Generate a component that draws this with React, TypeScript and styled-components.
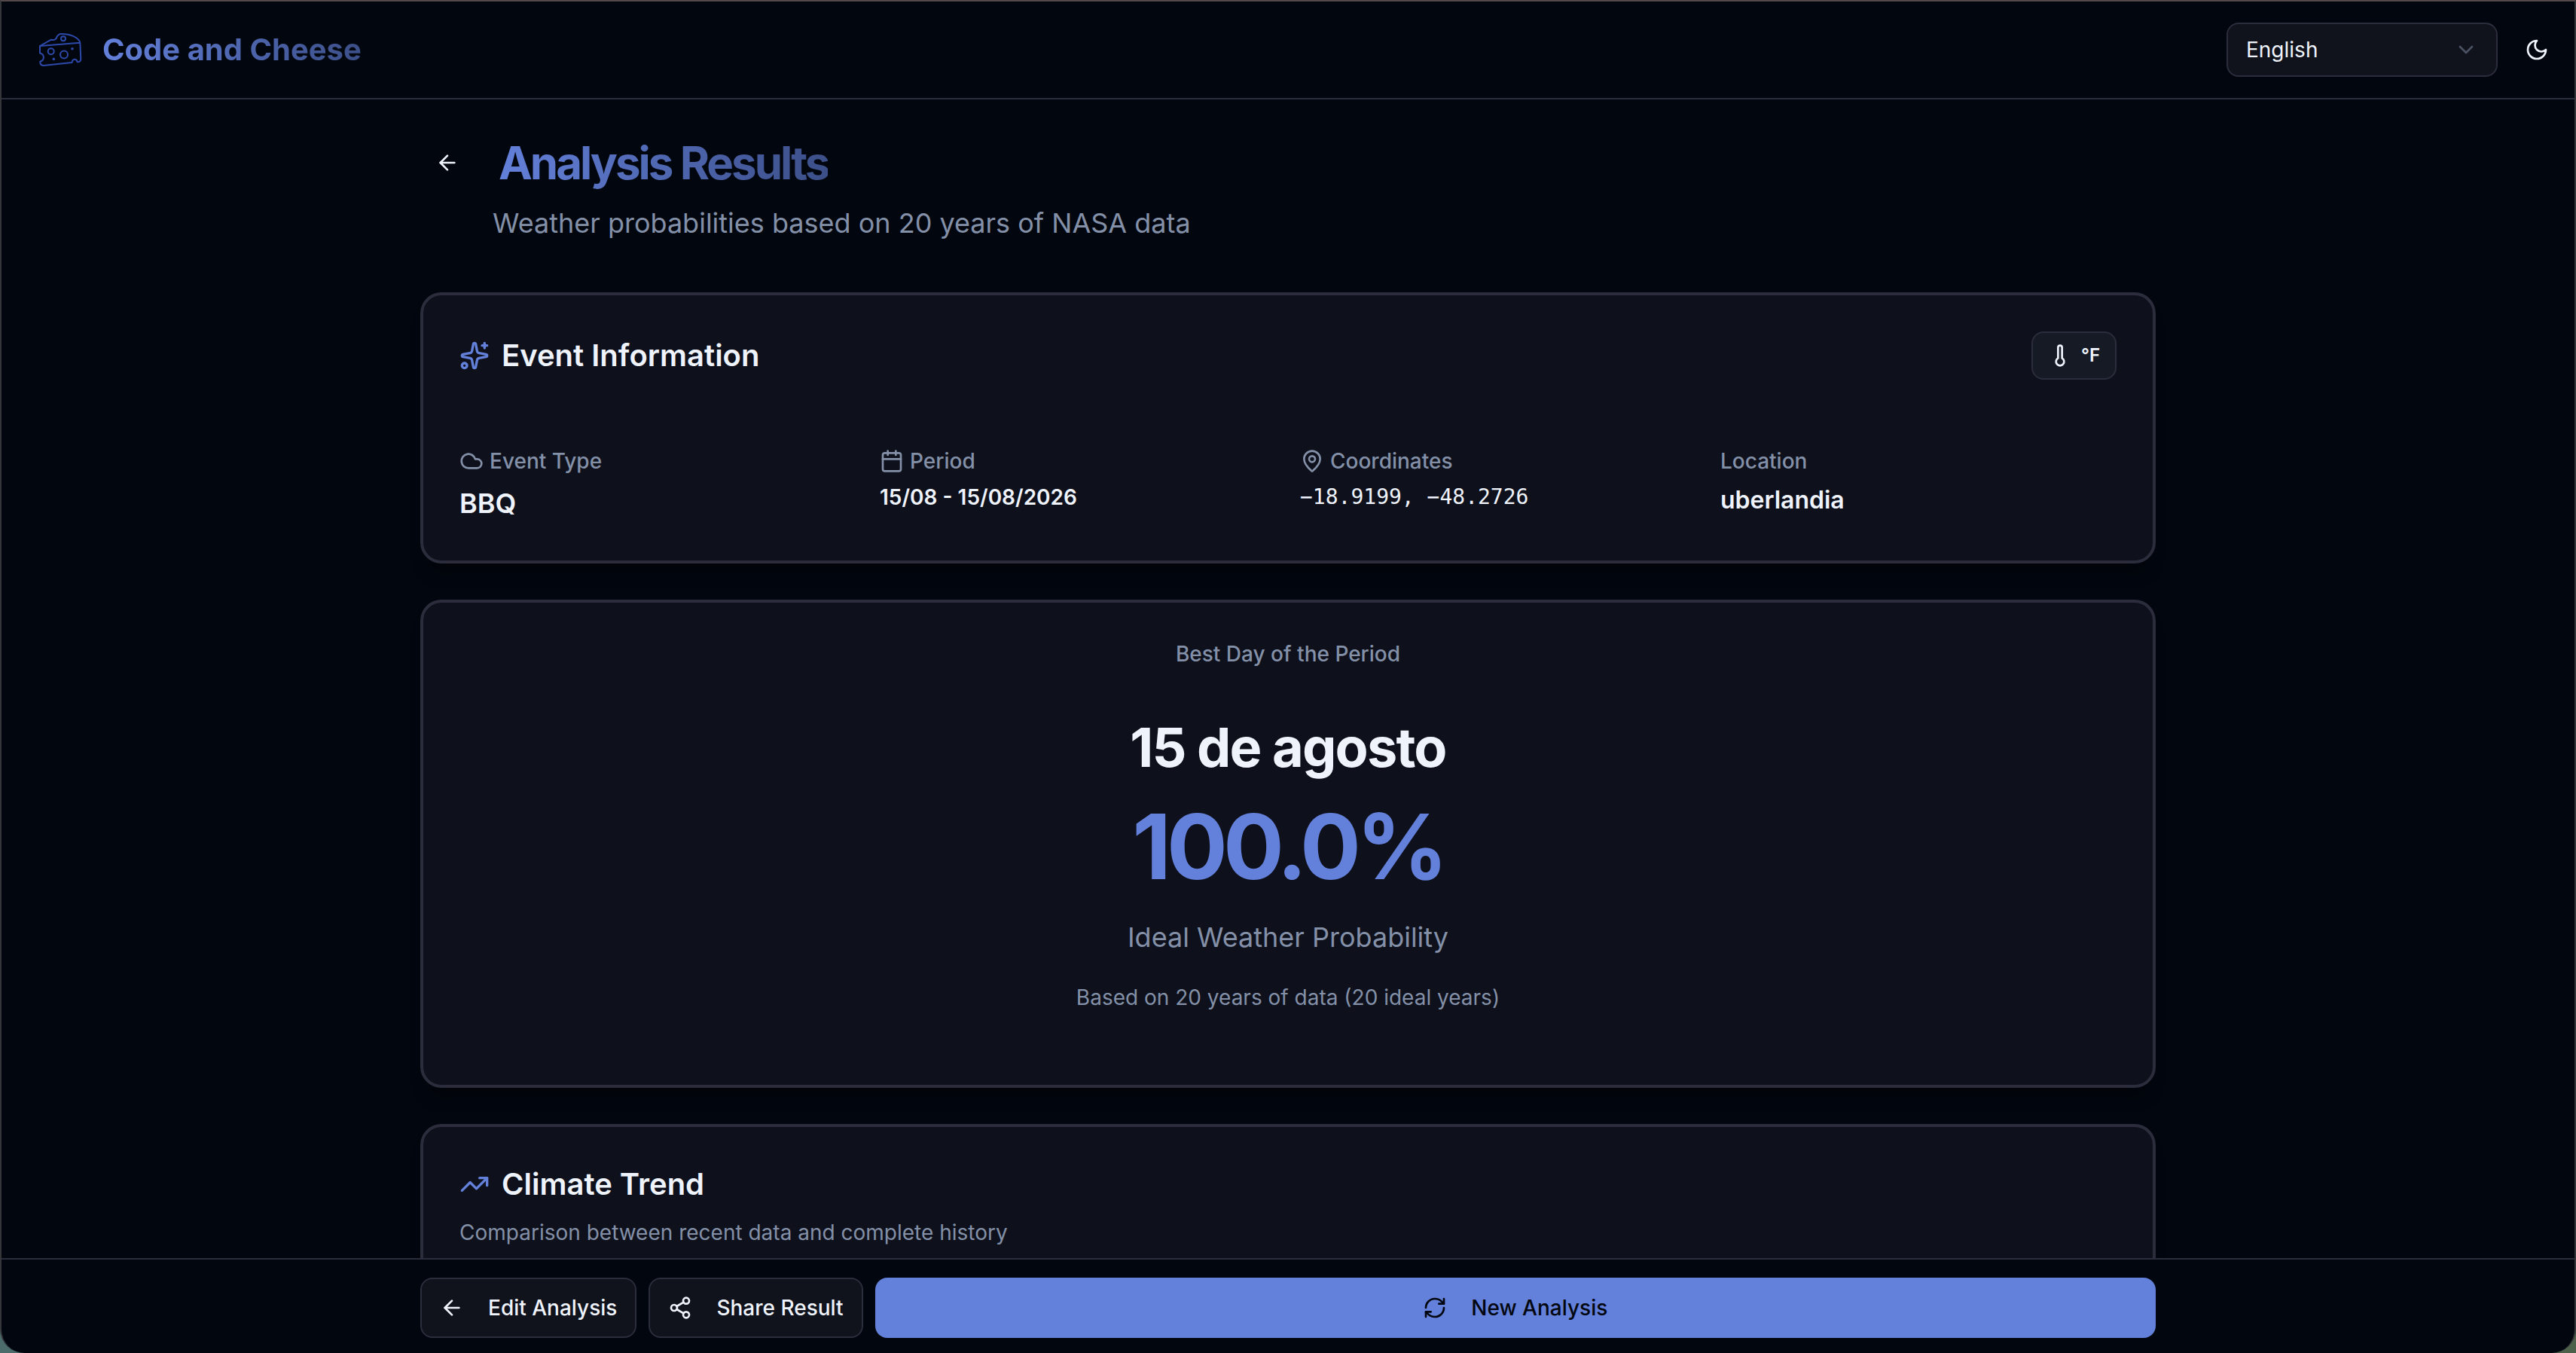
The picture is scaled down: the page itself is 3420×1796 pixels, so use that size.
import React from "react";
import styled, { createGlobalStyle, css } from "styled-components";
import {
  ArrowLeft,
  Calendar,
  ChevronDown,
  Cloud,
  MapPin,
  RefreshCw,
  Share2,
  Sparkles,
  Thermometer,
  TrendingUp,
} from "lucide-react";

const color = {
  page: "#02060e",
  card: "#0e101b",
  control: "#10121c",
  border: "#2b2d3c",
  text: "#eff3fb",
  muted: "#8390a8",
  primary: "#6380da",
};

const radius = {
  control: "16px",
  card: "28px",
  window: "32px",
};

const tracking = {
  tight: "-0.025em",
  tighter: "-0.05em",
};

const GlobalStyle = createGlobalStyle`
  *, *::before, *::after { box-sizing: border-box; }
  body {
    margin: 0;
    background: linear-gradient(to right, #4b6c6b, #4d6049);
    color: ${color.text};
    font-family: Inter, "Liberation Sans", sans-serif;
    font-size: 28px;
    line-height: 40px;
    -webkit-font-smoothing: antialiased;
  }
  h1, h2, p, dl, dd { margin: 0; }
  button, select { font: inherit; color: inherit; }
`;

const Shell = styled.div`
  display: flex;
  flex-direction: column;
  height: 100vh;
  overflow: hidden;
  background: ${color.page};
  border: 2px solid #34363a;
  border-top-color: #54484a;
  border-bottom: 0;
  border-radius: 0 0 ${radius.window} ${radius.window};
`;

const Header = styled.header`
  display: flex;
  flex: none;
  align-items: center;
  justify-content: space-between;
  padding: 28px 14px 28px 46px;
  border-bottom: 2px solid ${color.border};
`;

const Brand = styled.a`
  display: flex;
  align-items: center;
  gap: 24px;
  text-decoration: none;
`;

const gradientText = css`
  background: linear-gradient(to right, ${color.primary}, rgba(99, 128, 218, 0.6));
  background-clip: text;
  -webkit-background-clip: text;
  color: transparent;
`;

const BrandName = styled.span`
  ${gradientText}
  font-size: 40px;
  line-height: 56px;
  font-weight: 700;
`;

const HeaderTools = styled.div`
  display: flex;
  align-items: center;
  gap: 16px;
`;

const SelectBox = styled.label`
  display: grid;
  align-items: center;
  width: 360px;
  height: 72px;

  > * { grid-area: 1 / 1; }

  > svg {
    justify-self: end;
    margin-right: 26px;
    opacity: 0.5;
    color: ${color.muted};
    pointer-events: none;
  }
`;

const LanguageSelect = styled.select`
  appearance: none;
  width: 100%;
  height: 100%;
  padding: 0 24px;
  background: ${color.control};
  border: 2px solid ${color.border};
  border-radius: ${radius.control};
`;

const IconButton = styled.button`
  display: grid;
  place-items: center;
  width: 72px;
  height: 72px;
  padding: 0;
  background: transparent;
  border: 0;
  border-radius: ${radius.control};
`;

const Content = styled.main`
  flex: 1;
  min-height: 0;
  overflow-y: auto;
  scrollbar-width: none;
  padding: 48px 32px;
`;

const Column = styled.div`
  display: flex;
  flex-direction: column;
  gap: 48px;
  max-width: 2304px;
  margin: 0 auto;
`;

const PageHead = styled.div`
  display: grid;
  gap: 16px;
  margin-bottom: 16px;
`;

const TitleRow = styled.div`
  display: flex;
  align-items: center;
  gap: 32px;
`;

const PageTitle = styled.h1`
  ${gradientText}
  font-size: 60px;
  line-height: 72px;
  font-weight: 700;
  letter-spacing: ${tracking.tighter};
`;

const Lead = styled.p<{ $indent?: boolean }>`
  margin-left: ${(p) => (p.$indent ? "96px" : "0")};
  font-size: 36px;
  line-height: 56px;
  color: ${color.muted};
`;

const Card = styled.section<{ $centered?: boolean }>`
  padding: 48px;
  background: ${color.card};
  border: 4px solid ${color.border};
  border-radius: ${radius.card};
  box-shadow: 0 20px 24px -16px rgba(0, 0, 0, 0.6);
  text-align: ${(p) => (p.$centered ? "center" : "left")};
`;

const CardHead = styled.div`
  display: flex;
  align-items: center;
  justify-content: space-between;
`;

const CardTitle = styled.h2`
  display: flex;
  align-items: center;
  gap: 16px;
  font-size: 40px;
  line-height: 56px;
  font-weight: 600;

  svg { color: ${color.primary}; }
`;

const OutlineButton = styled.button<{ $compact?: boolean }>`
  display: inline-flex;
  align-items: center;
  gap: ${(p) => (p.$compact ? "12px" : "32px")};
  height: ${(p) => (p.$compact ? "64px" : "80px")};
  padding: 0 ${(p) => (p.$compact ? "20px" : "24px")};
  background: ${(p) => (p.$compact ? "#161a25" : color.control)};
  border: 2px solid ${color.border};
  border-radius: ${radius.control};
  font-size: ${(p) => (p.$compact ? "24px" : "28px")};
  font-weight: ${(p) => (p.$compact ? 600 : 500)};
  white-space: nowrap;
`;

const PrimaryButton = styled.button`
  display: flex;
  flex: 1;
  align-items: center;
  justify-content: center;
  gap: 32px;
  height: 80px;
  background: ${color.primary};
  border: 0;
  border-radius: ${radius.control};
  color: ${color.page};
  font-weight: 500;
`;

const Facts = styled.dl`
  display: grid;
  grid-template-columns: repeat(4, 1fr);
  gap: 32px;
  margin-top: 88px;
`;

const Fact = styled.div`
  display: grid;
  align-content: start;
  gap: 8px;
`;

const FactLabel = styled.dt`
  display: flex;
  align-items: center;
  gap: 8px;
  color: ${color.muted};
  font-weight: 500;
`;

type ValueSize = "large" | "medium" | "small" | "code";

const valueStyles = {
  large: css`font-size: 36px; line-height: 56px;`,
  medium: css`font-size: 32px; line-height: 48px;`,
  small: css`font-size: 28px; line-height: 40px;`,
  code: css`
    font-family: "DejaVu Sans Mono", "Liberation Mono", monospace;
    font-weight: 400;
  `,
};

const FactValue = styled.dd<{ $size: ValueSize }>`
  font-weight: 600;
  ${(p) => valueStyles[p.$size]}
`;

const Caption = styled.p<{ $strong?: boolean }>`
  color: ${color.muted};
  font-weight: ${(p) => (p.$strong ? 500 : 400)};
`;

const BestDay = styled.div`
  display: grid;
  gap: 32px;
  margin-top: 64px;
  padding-bottom: 48px;
`;

const DayName = styled.p`
  font-size: 72px;
  line-height: 80px;
  font-weight: 700;
  letter-spacing: ${tracking.tight};
`;

const Probability = styled.p`
  color: ${color.primary};
  font-size: 120px;
  line-height: 120px;
  font-weight: 700;
  letter-spacing: ${tracking.tighter};
`;

const TrendHead = styled.div`
  display: grid;
  gap: 16px;
  padding-bottom: 48px;
`;

const ActionBar = styled.footer`
  flex: none;
  padding: 24px 32px 20px;
  border-top: 2px solid ${color.border};
`;

const Actions = styled.div`
  display: flex;
  gap: 16px;
  max-width: 2304px;
  margin: 0 auto;
`;

function CheeseLogo() {
  return (
    <svg width="64" height="64" viewBox="0 0 64 64" fill="none" stroke="#2d49aa" strokeWidth="2" strokeLinejoin="round" strokeLinecap="round" aria-hidden="true">
      <path d="M5 27 20 18.700C24 20 27 18 27.500 15Q29.500 11 33.300 11C45 11 56.500 15.500 58.300 22.700L59.300 44.500Q59 48.500 54.700 48.300C53.500 43.500 48.500 43.500 47.500 49L9.500 53Q5 52.500 5.300 47.700C11.500 46 11.500 38 5 36.500ZL58.300 22.700" />
      <circle cx="36" cy="17.300" r="3" />
      <circle cx="19.700" cy="34.200" r="4" />
      <circle cx="37" cy="38.400" r="5" />
      <circle cx="48" cy="30.700" r="0.800" fill="#2d49aa" />
      <circle cx="23.300" cy="44.400" r="0.800" fill="#2d49aa" />
    </svg>
  );
}

function MoonIcon() {
  return (
    <svg width="32" height="32" viewBox="0 0 24 24" fill="none" stroke="currentColor" strokeWidth="2" strokeLinecap="round" strokeLinejoin="round" aria-hidden="true">
      <path d="M12 3a6 6 0 0 0 9 9 9 9 0 1 1-9-9Z" />
    </svg>
  );
}

const facts: { label: string; value: string; size: ValueSize; icon?: React.ReactNode }[] = [
  { label: "Event Type", value: "BBQ", size: "large", icon: <Cloud size={32} /> },
  { label: "Period", value: "15/08 - 15/08/2026", size: "small", icon: <Calendar size={32} /> },
  { label: "Coordinates", value: "−18.9199, −48.2726", size: "code", icon: <MapPin size={32} /> },
  { label: "Location", value: "uberlandia", size: "medium" },
];

export default function App() {
  return (
    <>
      <GlobalStyle />
      <Shell>
        <Header>
          <Brand href="#">
            <CheeseLogo />
            <BrandName>Code and Cheese</BrandName>
          </Brand>
          <HeaderTools>
            <SelectBox>
              <LanguageSelect aria-label="Language" defaultValue="en">
                <option value="en">English</option>
              </LanguageSelect>
              <ChevronDown size={32} />
            </SelectBox>
            <IconButton aria-label="Toggle theme">
              <MoonIcon />
            </IconButton>
          </HeaderTools>
        </Header>

        <Content>
          <Column>
            <PageHead>
              <TitleRow>
                <IconButton aria-label="Back">
                  <ArrowLeft size={32} />
                </IconButton>
                <PageTitle>Analysis Results</PageTitle>
              </TitleRow>
              <Lead $indent>Weather probabilities based on 20 years of NASA data</Lead>
            </PageHead>

            <Card>
              <CardHead>
                <CardTitle>
                  <Sparkles size={40} />
                  Event Information
                </CardTitle>
                <OutlineButton $compact>
                  <Thermometer size={32} />
                  °F
                </OutlineButton>
              </CardHead>
              <Facts>
                {facts.map((fact) => (
                  <Fact key={fact.label}>
                    <FactLabel>
                      {fact.icon}
                      {fact.label}
                    </FactLabel>
                    <FactValue $size={fact.size}>{fact.value}</FactValue>
                  </Fact>
                ))}
              </Facts>
            </Card>

            <Card $centered>
              <Caption $strong>Best Day of the Period</Caption>
              <BestDay>
                <DayName>15 de agosto</DayName>
                <Probability>100.0%</Probability>
                <Lead>Ideal Weather Probability</Lead>
                <Caption>Based on 20 years of data (20 ideal years)</Caption>
              </BestDay>
            </Card>

            <Card>
              <TrendHead>
                <CardTitle>
                  <TrendingUp size={40} />
                  Climate Trend
                </CardTitle>
                <Caption>Comparison between recent data and complete history</Caption>
              </TrendHead>
            </Card>
          </Column>
        </Content>

        <ActionBar>
          <Actions>
            <OutlineButton>
              <ArrowLeft size={32} />
              Edit Analysis
            </OutlineButton>
            <OutlineButton>
              <Share2 size={32} />
              Share Result
            </OutlineButton>
            <PrimaryButton>
              <RefreshCw size={32} />
              New Analysis
            </PrimaryButton>
          </Actions>
        </ActionBar>
      </Shell>
    </>
  );
}
